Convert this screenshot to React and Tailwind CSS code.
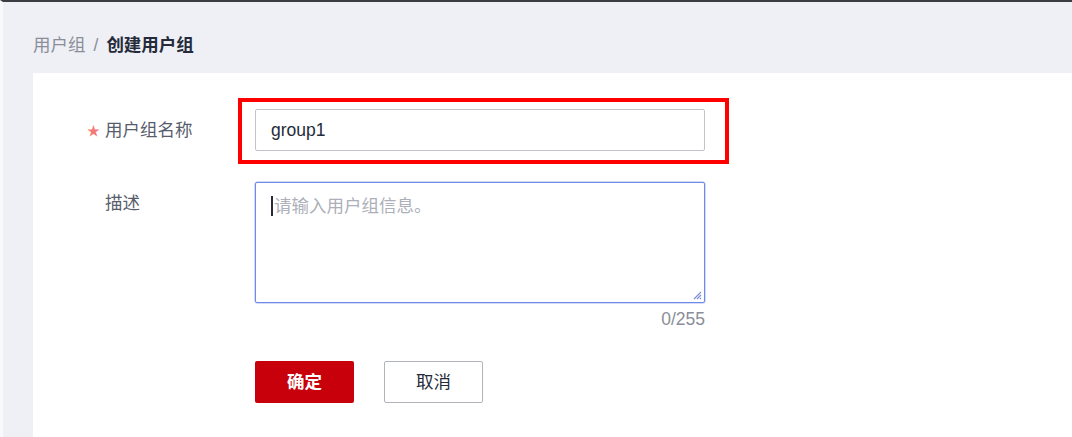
import React from "react";

const font = { fontFamily: '"Liberation Sans", "Noto Sans CJK SC", sans-serif' };

function FormLabel({ required, children }) {
  return (
    <div className="flex w-[168px] shrink-0 items-center text-[17.5px] text-[#575d6c]">
      <span className="w-[18px] pt-[2px] text-[13px] text-[#f47a75]">{required ? "★" : ""}</span>
      <span>{children}</span>
    </div>
  );
}

export default function App() {
  return (
    <div
      className="flex h-[437px] flex-col overflow-hidden border-t-2 border-l-[3px] border-t-[#3c3d42] border-l-[#f8f9fb] bg-[#eef0f5]"
      style={font}
    >
      {/* breadcrumb */}
      <div className="flex h-[71px] shrink-0 items-start gap-[8px] pl-[30px] pt-[33px] text-[17.5px] leading-[20px]">
        <span className="text-[#8a8e99]">用户组</span>
        <span className="text-[#8a8e99]">/</span>
        <span className="font-bold text-[#252b3a]">创建用户组</span>
      </div>

      {/* form panel */}
      <div className="ml-[30px] flex-1 bg-white pl-[54px] pt-[36px]">
        <div className="flex h-[42px] items-center">
          <FormLabel required>用户组名称</FormLabel>
          <div className="relative">
            <input
              readOnly
              defaultValue="group1"
              className="h-[42px] w-[450px] rounded-[2px] border border-[#c2c4c9] px-[15px] text-[17.5px] text-[#252b3a] outline-none"
              style={font}
            />
            {/* annotation frame */}
            <div className="pointer-events-none absolute -left-[17px] -top-[11px] h-[66px] w-[491px] border-4 border-[#ff0000]" />
          </div>
        </div>

        <div className="mt-[31px] flex">
          <div className="pt-[8px]">
            <FormLabel>描述</FormLabel>
          </div>
          <div className="flex w-[450px] flex-col">
            <div className="relative h-[121px] rounded-[2px] border border-[#6f8ae8] px-[15px] pt-[12px] text-[17.5px] leading-[22px] shadow-[0_0_0_0.5px_#a9b8f0]">
              <div className="flex items-center">
                <span className="mr-[1px] inline-block h-[20px] w-[2px] bg-[#252b3a]" />
                <span className="text-[#adb0b8]">请输入用户组信息。</span>
              </div>
              <svg
                className="absolute bottom-[2px] right-[2px]"
                width="9"
                height="9"
                viewBox="0 0 9 9"
              >
                <path d="M1 8 L8 1 M4 8 L8 4 M7 8 L8 7" stroke="#7b8fd6" strokeWidth="1.2" />
              </svg>
            </div>
            <div className="mt-[6px] text-right text-[17.5px] leading-[20px] text-[#8a8e99]">0/255</div>
          </div>
        </div>

        <div className="mt-[32px] flex gap-[30px] pl-[168px]">
          <button className="h-[42px] w-[99px] rounded-[2px] bg-[#c7000b] text-[17.5px] font-bold text-white">
            确定
          </button>
          <button className="h-[42px] w-[99px] rounded-[2px] border border-[#b1b4bb] bg-white text-[17.5px] text-[#252b3a]">
            取消
          </button>
        </div>
      </div>
    </div>
  );
}
